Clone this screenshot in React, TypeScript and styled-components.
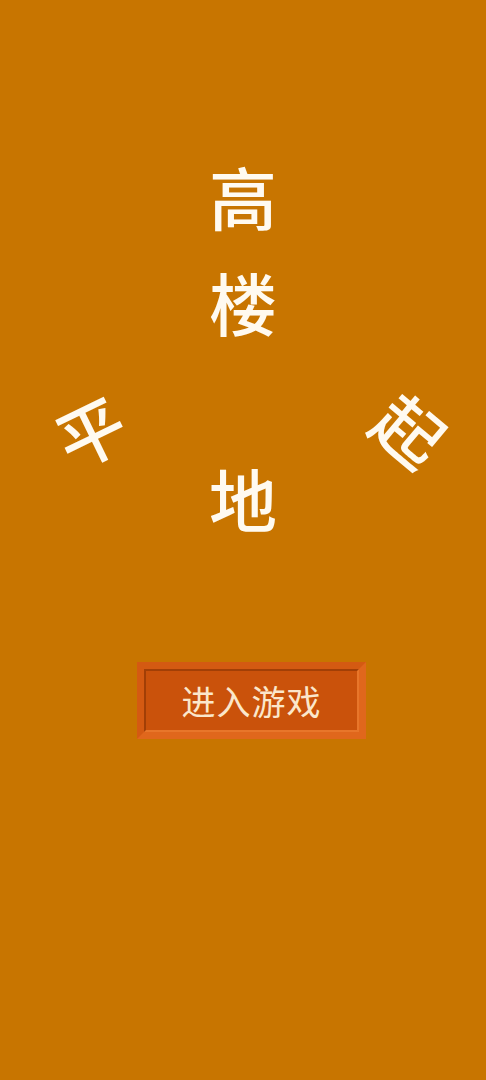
import React from "react";
import styled, { createGlobalStyle } from "styled-components";

const Global = createGlobalStyle`
  html, body { margin: 0; padding: 0; }
  body { background: #c87500; font-family: "Noto Sans CJK SC", "Noto Sans", sans-serif; }
`;

const Page = styled.div`
  width: 486px;
  height: 1080px;
  background: #c87500;
  display: flex;
  flex-direction: column;
  align-items: center;
  padding-top: 162px;
  box-sizing: border-box;
  overflow: hidden;
`;

const Title = styled.div`
  width: 100%;
  display: grid;
  grid-template-columns: 1fr 68px 1fr;
  grid-template-areas:
    ". gao ."
    ". lou ."
    "ping . qi"
    ". di .";
  grid-template-rows: 106px 128px 68px auto;
`;

const Char = styled.div<{ $area: string; $rot?: number; $dx?: number; $dy?: number }>`
  grid-area: ${(p) => p.$area};
  font-size: 68px;
  line-height: 68px;
  height: 68px;
  width: 68px;
  text-align: center;
  color: #fffaf0;
  font-weight: 500;
  justify-self: center;
  transform: translate(${(p) => p.$dx ?? 0}px, ${(p) => p.$dy ?? 0}px) rotate(${(p) => p.$rot ?? 0}deg);
`;

const StartButton = styled.button`
  margin-top: 130px;
  margin-left: 17px;
  width: 229px;
  height: 77px;
  padding: 0;
  box-sizing: border-box;
  background: #c9500a;
  border-style: solid;
  border-width: 7px;
  border-color: #d45a12 #e0671c #e0671c #d45a12;
  cursor: pointer;
  display: flex;
`;

const ButtonFace = styled.span`
  flex: 1;
  display: flex;
  align-items: center;
  justify-content: center;
  border-style: solid;
  border-width: 2px;
  border-color: #a23f06 #e8762a #e8762a #a23f06;
  background: #ca520b;
  font-family: "Noto Sans CJK SC", "Noto Sans", sans-serif;
  font-size: 34px;
  letter-spacing: 1px;
  color: #fbe7cb;
`;

export default function App() {
  return (
    <>
      <Global />
      <Page>
        <Title>
          <Char $area="gao">高</Char>
          <Char $area="lou">楼</Char>
          <Char $area="ping" $rot={-26} $dx={-15} $dy={0}>平</Char>
          <Char $area="qi" $rot={40} $dx={29} $dy={-1}>起</Char>
          <Char $area="di">地</Char>
        </Title>
        <StartButton type="button">
          <ButtonFace>进入游戏</ButtonFace>
        </StartButton>
      </Page>
    </>
  );
}
